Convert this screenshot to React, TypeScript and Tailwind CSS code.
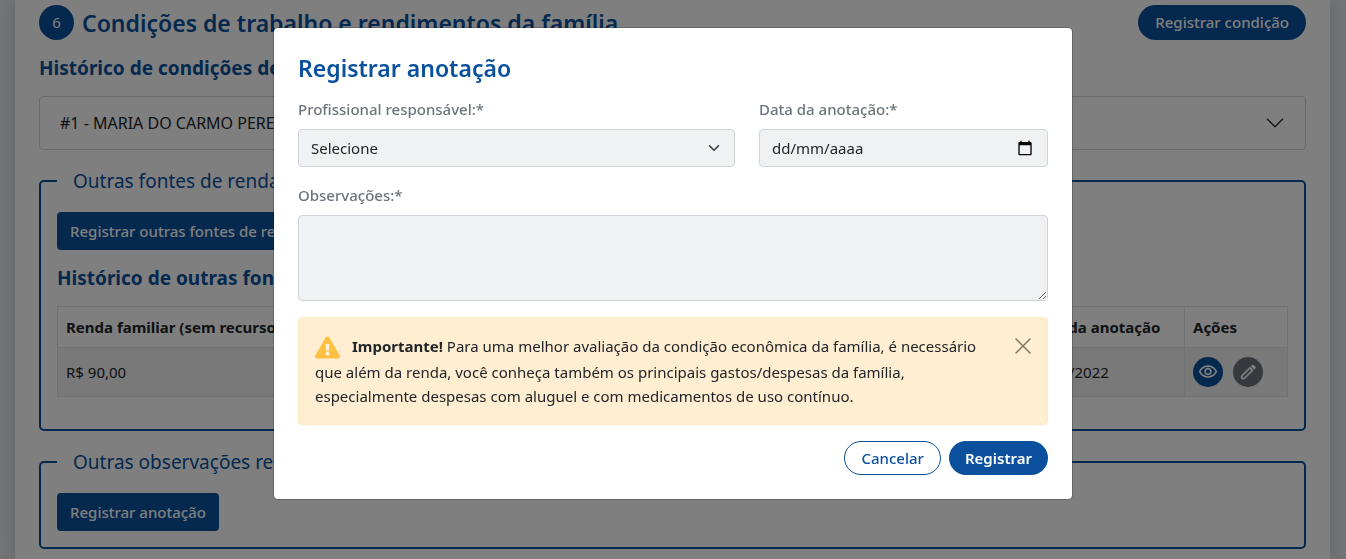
import { useState } from 'react';
import type { ReactNode } from 'react';
import { MdOutlineVisibility } from 'react-icons/md';

function Chevron({ className }: { className: string }) {
  return (
    <svg viewBox="0 0 16 16" className={className} fill="currentColor" aria-hidden="true">
      <path
        fillRule="evenodd"
        d="M1.646 4.646a.5.5 0 0 1 .708 0L8 10.293l5.646-5.647a.5.5 0 0 1 .708.708l-6 6a.5.5 0 0 1-.708 0l-6-6a.5.5 0 0 1 0-.708z"
      />
    </svg>
  );
}

function Pencil() {
  return (
    <svg viewBox="0 0 24 24" className="size-5" fill="none" stroke="currentColor" strokeLinejoin="round" aria-hidden="true">
      <path strokeWidth="2" d="M4.500 19.800v-3L14.300 7l3 3-9.800 9.800z" />
      <path fill="currentColor" strokeWidth="1.500" d="m16.300 5.200 1.500-1.500 2.900 2.900-1.500 1.500z" />
    </svg>
  );
}

function Section({ title, children }: { title: string; children: ReactNode }) {
  return (
    <fieldset className="mt-4 min-w-0 rounded-[5px] border-2 border-[#0a509c] px-4 pb-4">
      <legend className="mb-4 px-4 text-[19px] leading-[30px] text-[#0a509c]">{title}</legend>
      {children}
    </fieldset>
  );
}

function PrimaryButton({ children }: { children: ReactNode }) {
  return (
    <button type="button" className="block h-[38px] rounded bg-[#0a509c] px-[13px] text-[15px] font-medium text-white">
      {children}
    </button>
  );
}

function IncomePage() {
  return (
    <div className="min-h-screen bg-[#e6e9ee] pr-4 pl-[15px]">
      <main className="min-h-screen bg-white px-6 pt-[5px] pb-[10px] shadow-[0_0_16px_rgba(0,0,0,0.15)]">
        <header className="flex h-[35px] items-center justify-between">
          <div className="flex items-center gap-2">
            <span className="flex size-[35px] items-center justify-center rounded-full bg-[#0a509c] text-[15px] text-white">
              6
            </span>
            <h1 className="text-[23px] leading-8 font-semibold text-[#0a509c]">
              Condições de trabalho e rendimentos da família
            </h1>
          </div>
          <button type="button" className="h-[35px] rounded-full bg-[#0a509c] px-[17px] text-[15px] font-medium text-white">
            Registrar condição
          </button>
        </header>

        <h2 className="my-4 text-[19px] leading-6 font-bold text-[#0a509c]">Histórico de condições de trabalho</h2>
        <button
          type="button"
          className="flex h-[54px] w-full items-center justify-between rounded border border-[#ced4da] px-5 text-[16px] text-[#212529]"
        >
          #1 - MARIA DO CARMO PEREIRA
          <Chevron className="size-5" />
        </button>

        <Section title="Outras fontes de renda da família">
          <PrimaryButton>Registrar outras fontes de renda</PrimaryButton>
          <h2 className="my-4 text-[19px] leading-6 font-bold text-[#0a509c]">Histórico de outras fontes de renda</h2>
          <table className="mb-4 w-full table-fixed border-collapse text-left text-[15px] text-[#212529]">
            <thead>
              <tr className="h-[41px]">
                <th className="border border-[#dee2e6] px-2 font-bold">Renda familiar (sem recursos de programas sociais)</th>
                <th className="w-[164px] border border-[#dee2e6] px-2 font-bold">Data da anotação</th>
                <th className="w-[103px] border border-[#dee2e6] px-2 font-bold">Ações</th>
              </tr>
            </thead>
            <tbody>
              <tr className="h-[49px] bg-[#f2f2f2]">
                <td className="border border-[#dee2e6] px-2">R$ 90,00</td>
                <td className="border border-[#dee2e6] px-2">12/12/2022</td>
                <td className="border border-[#dee2e6] px-2">
                  <div className="flex gap-[10px]">
                    <button
                      type="button"
                      aria-label="Visualizar"
                      className="flex size-[30px] items-center justify-center rounded-full bg-[#0a509c] text-white"
                    >
                      <MdOutlineVisibility size={20} />
                    </button>
                    <button
                      type="button"
                      aria-label="Editar"
                      className="flex size-[30px] items-center justify-center rounded-full bg-[#6c757d] text-white"
                    >
                      <Pencil />
                    </button>
                  </div>
                </td>
              </tr>
            </tbody>
          </table>
        </Section>

        <Section title="Outras observações relevantes">
          <PrimaryButton>Registrar anotação</PrimaryButton>
        </Section>
      </main>
    </div>
  );
}

function NoteDialog() {
  const [date, setDate] = useState('');
  const label = 'mb-2 block text-[15px] leading-6 font-medium text-[#6c757d]';
  const field = 'block w-full rounded border border-[#ced4da] bg-[#f0f1f3] px-3 text-[15px] text-[#212529]';

  return (
    <div className="fixed inset-0 overflow-hidden bg-black/50 px-4 py-[27px]">
      <form
        role="dialog"
        aria-modal="true"
        aria-labelledby="dialog-title"
        className="mx-auto max-w-[800px] rounded-[5px] border border-black/20 bg-white bg-clip-padding p-6"
      >
        <h2 id="dialog-title" className="mb-[13px] text-[23px] leading-8 font-semibold text-[#0a509c]">
          Registrar anotação
        </h2>

        <div className="mb-4 flex gap-6">
          <div className="w-[437px]">
            <label htmlFor="professional" className={label}>
              Profissional responsável:*
            </label>
            <div className="relative">
              <select id="professional" className={`${field} h-[38px] appearance-none`}>
                <option>Selecione</option>
              </select>
              <svg
                viewBox="0 0 16 16"
                className="pointer-events-none absolute top-[13px] right-[13px] h-3 w-4 text-[#343a40]"
                fill="none"
                stroke="currentColor"
                strokeWidth="2"
                strokeLinecap="round"
                strokeLinejoin="round"
                aria-hidden="true"
              >
                <path d="m2 5 6 6 6-6" />
              </svg>
            </div>
          </div>
          <div className="flex-1">
            <label htmlFor="note-date" className={label}>
              Data da anotação:*
            </label>
            <div className="relative">
              <input
                id="note-date"
                type="text"
                inputMode="numeric"
                value={date}
                onChange={(event) => setDate(event.target.value)}
                placeholder="dd/mm/aaaa"
                className={`${field} h-[38px] placeholder:text-[#212529]`}
              />
              <button type="button" aria-label="Abrir calendário" className="absolute top-[11px] right-[15px] text-black">
                <svg viewBox="0 0 24 24" className="block size-4" fill="currentColor" aria-hidden="true">
                  <path d="M20 3h-1V1h-2v2H7V1H5v2H4c-1.100 0-2 .9-2 2v16c0 1.100.9 2 2 2h16c1.100 0 2-.9 2-2V5c0-1.100-.9-2-2-2zm0 18H4V8h16v13z" />
                </svg>
              </button>
            </div>
          </div>
        </div>

        <label htmlFor="notes" className={label}>
          Observações:*
        </label>
        <textarea id="notes" className={`${field} h-[86px] resize py-1.5`} />

        <div
          role="alert"
          className="mt-4 flex items-start justify-between rounded border border-[#ffeac0] bg-[#ffeed1] p-4 text-[15px] leading-6 text-[#212529]"
        >
          <p className="max-w-[672px]">
            <svg viewBox="0 0 576 512" className="mr-3 inline-block h-[25px] w-[25px] align-middle" aria-hidden="true">
              <path
                fill="#ffc042"
                d="M569.5 440C588 472 564.800 512 527.900 512H48.100c-36.900 0-60-40.100-41.600-72L246.400 24c18.500-32 64.700-32 83.200 0l239.900 416z"
              />
              <path
                fill="#ffeed1"
                d="M288 354c-25.400 0-46 20.600-46 46s20.600 46 46 46 46-20.600 46-46-20.600-46-46-46zm-43.700-165.300 7.400 136c.3 6.400 5.600 11.300 12 11.300h48.500c6.400 0 11.600-5 12-11.300l7.400-136c.4-6.900-5.100-12.700-12-12.700h-63.400c-6.900 0-12.300 5.800-11.900 12.700z"
              />
            </svg>
            <strong>Importante!</strong> Para uma melhor avaliação da condição econômica da família, é necessário que além
            da renda, você conheça também os principais gastos/despesas da família, especialmente despesas com aluguel e
            com medicamentos de uso contínuo.
          </p>
          <button type="button" aria-label="Fechar aviso" className="mt-1 text-black/50">
            <svg viewBox="0 0 16 16" className="block size-4" fill="none" stroke="currentColor" strokeWidth="1.5" strokeLinecap="round">
              <path d="m1 1 14 14M15 1 1 15" />
            </svg>
          </button>
        </div>

        <div className="mt-4 flex justify-end gap-2">
          <button type="button" className="h-[34px] rounded-full border border-[#0a509c] px-4 text-[15px] font-medium text-[#0a509c]">
            Cancelar
          </button>
          <button type="button" className="h-[34px] rounded-full bg-[#0a509c] px-4 text-[15px] font-semibold text-white">
            Registrar
          </button>
        </div>
      </form>
    </div>
  );
}

export default function App() {
  return (
    <div className="font-['Noto_Sans','Open_Sans',sans-serif]">
      <IncomePage />
      <NoteDialog />
    </div>
  );
}
